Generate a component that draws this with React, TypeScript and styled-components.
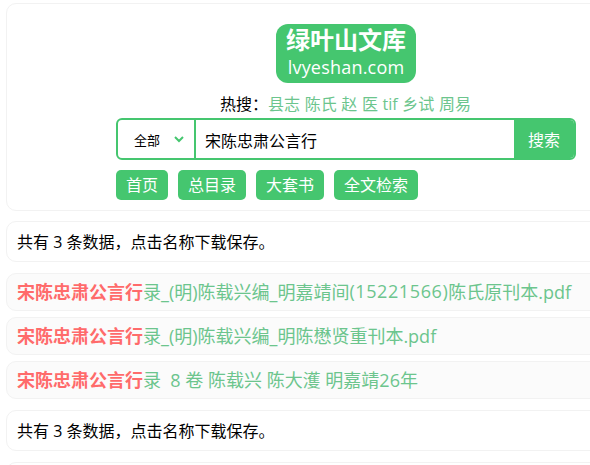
import React from "react";
import styled, { createGlobalStyle } from "styled-components";

const Global = createGlobalStyle`
  html, body { margin: 0; padding: 0; background: #fff; overflow: hidden; }
  body { font-family: "Open Sans", "Noto Sans CJK SC", sans-serif; color: #000; }
  * { box-sizing: border-box; }
`;
const Page = styled.div`
  width: 640px;
  padding: 3px 0 0 6px;
`;
const Card = styled.div`
  border: 1px solid #f2f2f2;
  border-radius: 10px;
  background: #fff;
`;
const Hero = styled(Card)`
  height: 208px;
  padding: 20px 0 0 109px;
  margin-bottom: 10px;
`;
const Center = styled.div`
  width: 460px;
  display: flex;
  flex-direction: column;
  align-items: center;
`;
const Logo = styled.div`
  width: 140px;
  height: 59px;
  background: #45c66f;
  border-radius: 12px;
  color: #fff;
  display: flex;
  flex-direction: column;
  align-items: center;
`;
const LogoTitle = styled.div`
  font-size: 24px;
  font-weight: 700;
  line-height: 32px;
`;
const LogoSub = styled.div`
  font-size: 18px;
  line-height: 22px;
  letter-spacing: 0.2px;
`;
const Hot = styled.div`
  font-size: 16px;
  line-height: 22px;
  margin-top: 10px;
  height: 25px;
  white-space: nowrap;
  padding-right: 1px;
`;
const HotLink = styled.span`
  color: #6cc58d;
  margin-right: 4.6px;
  &:last-child { margin-right: 0; }
`;
const SearchBar = styled.div`
  width: 460px;
  height: 42px;
  border: 2px solid #45c66f;
  border-radius: 6px;
  display: flex;
  overflow: hidden;
`;
const Select = styled.div`
  width: 78px;
  border-right: 2px solid #45c66f;
  display: flex;
  align-items: center;
  font-size: 13px;
  padding-left: 16px;
`;
const Chevron = styled.svg`
  width: 12px;
  height: 12px;
  margin-left: 13px;
`;
const Input = styled.div`
  flex: 1;
  font-size: 16px;
  padding: 1px 0 0 9px;
  display: flex;
  align-items: center;
`;
const SearchBtn = styled.div`
  width: 60px;
  background: #45c66f;
  color: #fff;
  font-size: 16px;
  display: flex;
  align-items: center;
  justify-content: center;
`;
const Nav = styled.div`
  width: 460px;
  display: flex;
  gap: 10px;
  margin-top: 10px;
`;
const NavBtn = styled.div`
  height: 30px;
  padding: 0 10px 2px;
  background: #45c66f;
  color: #fff;
  font-size: 16px;
  border-radius: 5px;
  display: flex;
  align-items: center;
`;
const Info = styled(Card)`
  height: 41px;
  font-size: 16px;
  padding: 0 0 2px 10px;
  display: flex;
  align-items: center;
  white-space: pre;
`;
const List = styled.div`
  display: flex;
  flex-direction: column;
  gap: 6px;
  margin: 11px 0;
`;
const Item = styled.div`
  height: 38px;
  border: 1px solid #f2f2f2;
  border-radius: 10px;
  background: #fbfbfb;
  padding: 0 0 2px 10px;
  font-size: 18px;
  color: #6cc58d;
  display: flex;
  align-items: center;
  white-space: pre;
`;
const Mark = styled.b`
  color: #ff6b6b;
`;
const Wide = styled.span`
  letter-spacing: 0.6px;
`;
const NextCard = styled(Card)`
  height: 20px;
  margin-top: 11px;
`;

const hot = ["县志", "陈氏", "赵", "医", "tif", "乡试", "周易"];
const nav = ["首页", "总目录", "大套书", "全文检索"];
const summary = "共有 3 条数据，点击名称下载保存。";

export default function App() {
  return (
    <Page>
      <Global />
      <Hero>
        <Center>
          <Logo>
            <LogoTitle>绿叶山文库</LogoTitle>
            <LogoSub>lvyeshan.com</LogoSub>
          </Logo>
          <Hot>
            热搜：
            {hot.map((h) => (
              <HotLink key={h}>{h}</HotLink>
            ))}
          </Hot>
          <SearchBar>
            <Select>
              全部
              <Chevron viewBox="0 0 12 12" fill="none" stroke="#45c66f" strokeWidth="2">
                <path d="M2 4l4 4 4-4" />
              </Chevron>
            </Select>
            <Input>宋陈忠肃公言行</Input>
            <SearchBtn>搜索</SearchBtn>
          </SearchBar>
          <Nav>
            {nav.map((n) => (
              <NavBtn key={n}>{n}</NavBtn>
            ))}
          </Nav>
        </Center>
      </Hero>
      <Info>{summary}</Info>
      <List>
        <Item>
          <Mark>宋陈忠肃公言行</Mark>
          录_(明)陈载兴编_明嘉靖间<Wide>(15221566)</Wide>陈氏原刊本.pdf
        </Item>
        <Item>
          <Mark>宋陈忠肃公言行</Mark>
          录_(明)陈载兴编_明陈懋贤重刊本.pdf
        </Item>
        <Item>
          <Mark>宋陈忠肃公言行</Mark>
          录  8 卷 陈载兴 陈大濩 明嘉靖26年
        </Item>
      </List>
      <Info>{summary}</Info>
      <NextCard />
    </Page>
  );
}
